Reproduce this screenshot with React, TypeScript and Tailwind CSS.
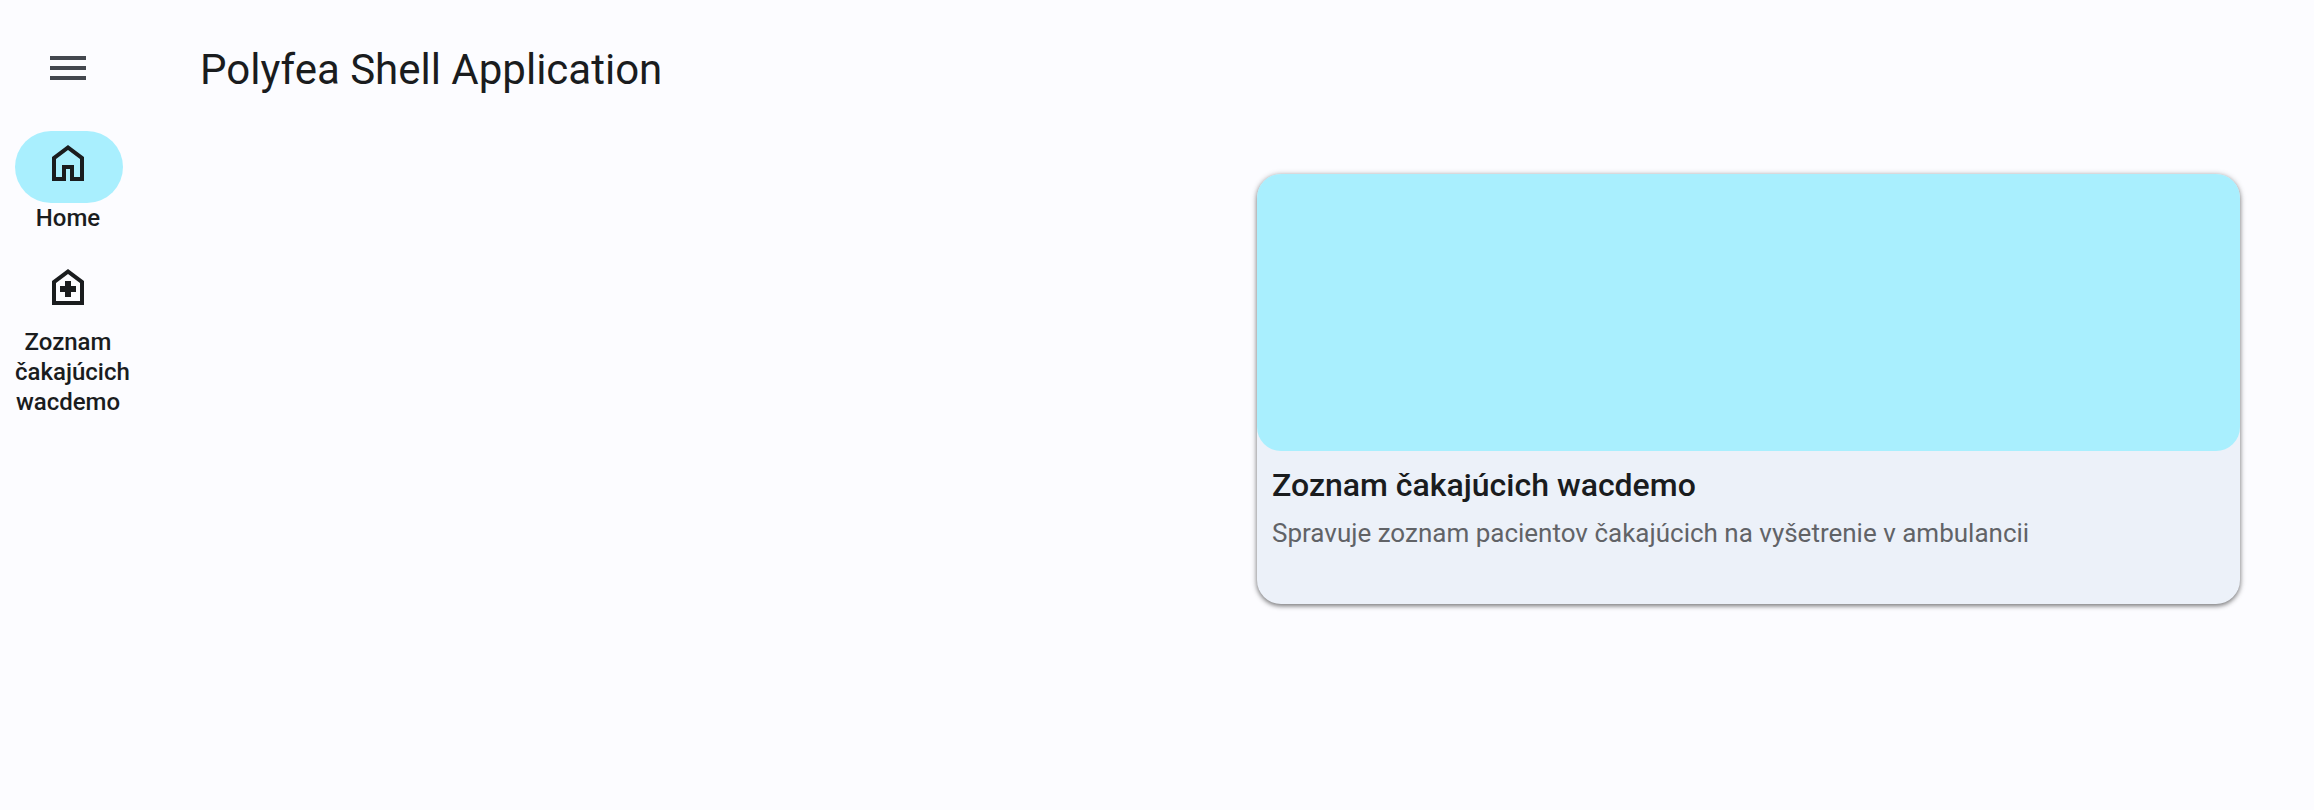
import React from 'react';

type NavItem = { label: string; path: string; active: boolean };

const navItems: NavItem[] = [
  {
    label: 'Home',
    path: 'M6 19h3v-6h6v6h3v-9l-6-4.5L6 10v9zM4 21V9l8-6 8 6v12h-7v-6h-2v6H4z',
    active: true,
  },
  {
    label: 'Zoznam čakajúcich wacdemo',
    path: 'M6 19h12v-9l-6-4.5L6 10v9zM4 21V9l8-6 8 6v12H4zM10.5 17v-2.5H8v-3h2.5V9h3v2.5H16v3h-2.5V17h-3z',
    active: false,
  },
];

function NavigationRail() {
  return (
    <nav className="flex w-[108px] flex-col gap-[22px]">
      {navItems.map((item) => (
        <a
          key={item.label}
          href="#"
          aria-current={item.active ? 'page' : undefined}
          className="flex flex-col items-center"
        >
          <span
            className={
              item.active
                ? 'flex h-[72px] w-full justify-center rounded-full bg-[#a9effe] pt-2 pr-0.5'
                : 'flex h-[72px] w-full justify-center rounded-full pt-2 pr-0.5'
            }
          >
            <svg viewBox="0 0 24 24" className="size-12" fill="currentColor" fillRule="evenodd" aria-hidden="true">
              <path d={item.path} />
            </svg>
          </span>
          <span className="w-full pr-0.5 text-center text-2xl leading-[30px] font-medium">{item.label}</span>
        </a>
      ))}
    </nav>
  );
}

function AppCard() {
  return (
    <a
      href="#"
      className="col-start-2 block rounded-3xl bg-[#ecf1f9] pb-[49px] shadow-[0_2px_4px_rgba(0,0,0,0.35),0_1px_6px_rgba(0,0,0,0.3)]"
    >
      <div className="h-[277px] rounded-3xl bg-[#a9effe]" />
      <div className="px-[15px] pt-3">
        <h2 className="text-[32px] leading-[44px] font-medium">Zoznam čakajúcich wacdemo</h2>
        <p className="mt-1 text-[26px] leading-[44px] text-[#616367]">
          Spravuje zoznam pacientov čakajúcich na vyšetrenie v ambulancii
        </p>
      </div>
    </a>
  );
}

export default function App() {
  return (
    <div className="min-h-screen bg-[#fcfcff] font-['Roboto','Noto_Sans',sans-serif] text-[#1a1c1e]">
      <header className="flex h-[131px] items-start pt-9">
        <div className="flex w-[200px] shrink-0 pl-9">
          <button type="button" aria-label="Menu" className="flex size-16 items-center justify-center text-[#43474e]">
            <svg viewBox="0 0 24 24" className="size-12" fill="currentColor" aria-hidden="true">
              <path d="M3 6h18v2H3zM3 11h18v2H3zM3 16h18v2H3z" />
            </svg>
          </button>
        </div>
        <h1 className="text-[42px] leading-[68px]">Polyfea Shell Application</h1>
      </header>
      <div className="flex">
        <aside className="w-[200px] shrink-0 pl-[15px]">
          <NavigationRail />
        </aside>
        <main className="grid flex-1 grid-cols-2 items-start px-[74px] pt-[43px]">
          <AppCard />
        </main>
      </div>
    </div>
  );
}
